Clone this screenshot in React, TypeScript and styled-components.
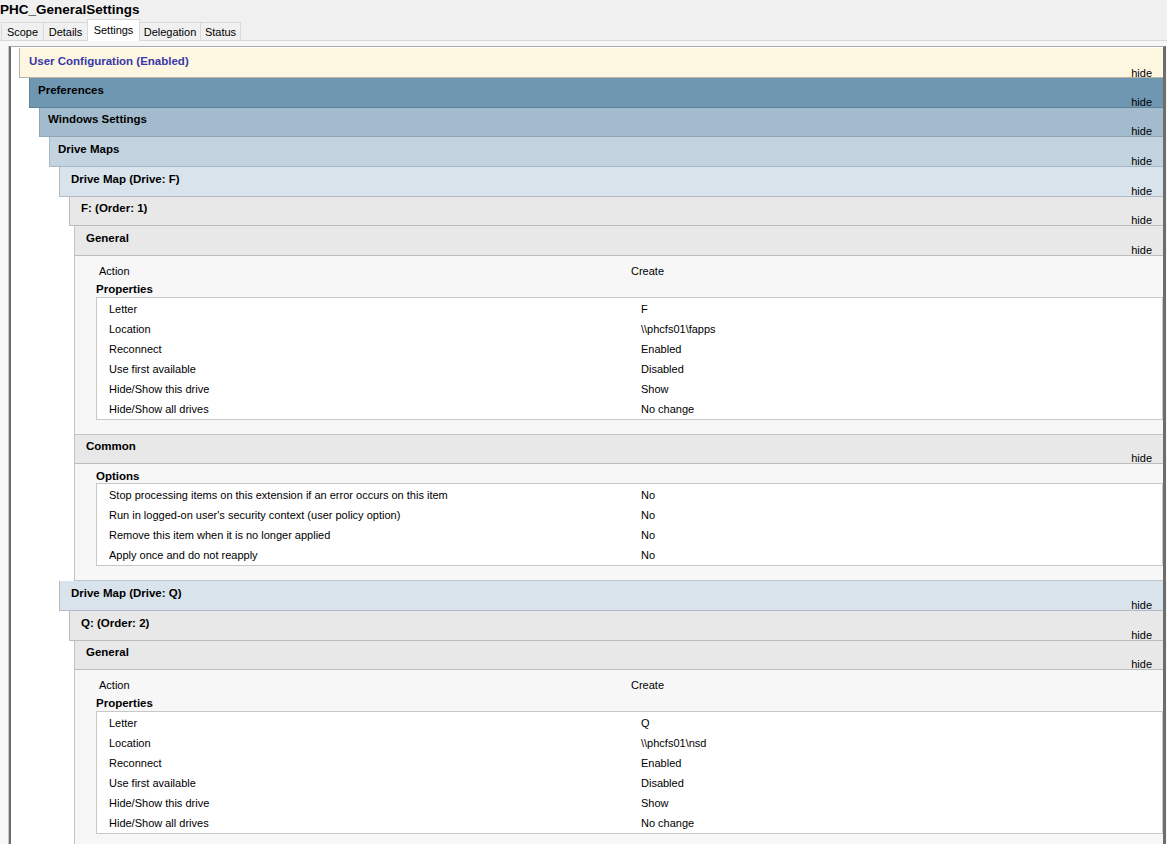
import React from 'react';
import styled, { createGlobalStyle, css } from 'styled-components';

type Tone = 'user' | 'pref' | 'win' | 'maps' | 'map' | 'item' | 'leaf';

const tones: Record<Tone, { bg: string; line: string; color: string; pad: number }> = {
  user: { bg: '#fdf6e1', line: '#b9b3a4', color: '#3838aa', pad: 9 },
  pref: { bg: '#6f97b2', line: '#5f8299', color: '#000', pad: 8 },
  win: { bg: '#a3bccd', line: '#8ea6b6', color: '#000', pad: 8 },
  maps: { bg: '#c3d4e0', line: '#a9b7c2', color: '#000', pad: 8 },
  map: { bg: '#d9e3eb', line: '#b3bcc4', color: '#000', pad: 11 },
  item: { bg: '#e8e8e8', line: '#bdbdbd', color: '#000', pad: 11 },
  leaf: { bg: '#e8e8e8', line: '#bdbdbd', color: '#000', pad: 11 },
};

const GlobalStyle = createGlobalStyle`
  html, body {
    margin: 0;
    padding: 0;
    overflow: hidden;
    background: #f0f0f0;
  }

  body {
    font-family: "Liberation Sans", Arial, sans-serif;
    font-size: 11px;
    color: #000;
  }
`;

const Page = styled.div`
  width: 1167px;
  height: 844px;
  display: flex;
  flex-direction: column;
  overflow: hidden;
`;

const PolicyName = styled.div`
  font-weight: bold;
  font-size: 13.5px;
  line-height: 19px;
`;

const TabStrip = styled.div`
  display: flex;
  align-items: flex-end;
  height: 21px;
  padding-left: 1px;
  border-bottom: 1px solid #d9d9d9;
`;

const Tab = styled.div<{ $w: number; $active?: boolean }>`
  box-sizing: border-box;
  width: ${({ $w }) => $w}px;
  height: 18px;
  line-height: 19px;
  text-align: center;
  font-size: 11px;
  background: #f0f0f0;
  border: 1px solid #d9d9d9;
  border-bottom: none;

  & + & {
    margin-left: -1px;
  }

  ${({ $active }) =>
    $active &&
    css`
      position: relative;
      height: 22px;
      line-height: 20px;
      margin-bottom: -1px;
      background: #fff;
      z-index: 1;
    `}
`;

const TabPanel = styled.div`
  flex: 1;
  background: #f7f7f7;
  padding: 5px 0 0 8px;
  display: flex;
  flex-direction: column;
`;

const Frame = styled.div`
  flex: 1;
  background: #fff;
  margin: 0 1px 0 1px;
  padding: 1px 0 0 8px;
  border-top: 1px solid #a9a9a9;
  border-left: 2px solid #6d6d6d;
  border-right: 3px solid #6d6d6d;
  box-shadow: -1px 0 0 #c6c6c6;
`;

const Header = styled.div<{ $tone: Tone }>`
  box-sizing: border-box;
  height: ${({ $tone }) => ($tone === 'user' ? '30.3px' : '29.6px')};
  display: flex;
  flex-direction: column;
  justify-content: space-between;
  padding: ${({ $tone }) => ($tone === 'user' ? '5.5px' : '4.5px')} 11px 0
    ${({ $tone }) => tones[$tone].pad}px;
  background: ${({ $tone }) => tones[$tone].bg};
  border-bottom: 1px solid ${({ $tone }) => tones[$tone].line};
  border-left: ${({ $tone }) => ($tone === 'leaf' ? 'none' : `1px solid ${tones[$tone].line}`)};
`;

const HeaderTitle = styled.span<{ $tone: Tone }>`
  font-weight: bold;
  font-size: 11.5px;
  line-height: 14px;
  color: ${({ $tone }) => tones[$tone].color};
  white-space: nowrap;
`;

const HideLink = styled.span`
  align-self: flex-end;
  font-size: 11px;
  line-height: 10px;
  color: #000;
`;

const Children = styled.div<{ $indent: number }>`
  margin-left: ${({ $indent }) => $indent}px;
`;

const Leaf = styled.section`
  background: #f7f7f7;
  border-left: 1px solid #c4c4c4;
  border-bottom: 1px solid #c4c4c4;
`;

const LeafBody = styled.div`
  padding: 3px 0 14px;
`;

const ActionRow = styled.div`
  display: grid;
  grid-template-columns: 532px 1fr;
  margin: 2px 0 0 24px;
  line-height: 20px;
`;

const GroupHeading = styled.div`
  font-weight: bold;
  font-size: 11.5px;
  line-height: 15px;
  margin-left: 21px;

  ${ActionRow} + & {
    margin-top: 1px;
  }

  &:first-child {
    margin-top: 3px;
    line-height: 13px;
  }
`;

const ValueBox = styled.div`
  margin-left: 21px;
  padding-top: 1px;
  background: #fff;
  border: 1px solid #c8c8c8;
`;

const ValueRow = styled.div`
  display: grid;
  grid-template-columns: 532px 1fr;
  padding-left: 12px;
  line-height: 20px;
  white-space: nowrap;
`;

type SectionProps = {
  title: string;
  tone: Tone;
  indent?: number;
  children?: React.ReactNode;
};

const Section = ({ title, tone, indent = 10, children }: SectionProps) => (
  <section>
    <Header $tone={tone}>
      <HeaderTitle $tone={tone}>{title}</HeaderTitle>
      <HideLink>hide</HideLink>
    </Header>
    <Children $indent={indent}>{children}</Children>
  </section>
);

const LeafSection = ({ title, children }: { title: string; children: React.ReactNode }) => (
  <Leaf>
    <Header $tone="leaf">
      <HeaderTitle $tone="leaf">{title}</HeaderTitle>
      <HideLink>hide</HideLink>
    </Header>
    <LeafBody>{children}</LeafBody>
  </Leaf>
);

const Values = ({ rows }: { rows: [string, string][] }) => (
  <ValueBox>
    {rows.map(([label, value]) => (
      <ValueRow key={label}>
        <span>{label}</span>
        <span>{value}</span>
      </ValueRow>
    ))}
  </ValueBox>
);

const driveMaps = [
  { letter: 'F', order: 1, location: '\\\\phcfs01\\fapps' },
  { letter: 'Q', order: 2, location: '\\\\phcfs01\\nsd' },
];

const commonOptions: [string, string][] = [
  ['Stop processing items on this extension if an error occurs on this item', 'No'],
  ["Run in logged-on user's security context (user policy option)", 'No'],
  ['Remove this item when it is no longer applied', 'No'],
  ['Apply once and do not reapply', 'No'],
];

const tabs = [
  { label: 'Scope', w: 43 },
  { label: 'Details', w: 45 },
  { label: 'Settings', w: 53, active: true },
  { label: 'Delegation', w: 62 },
  { label: 'Status', w: 41 },
];

export default function App() {
  return (
    <Page>
      <GlobalStyle />
      <PolicyName>PHC_GeneralSettings</PolicyName>
      <TabStrip>
        {tabs.map((t) => (
          <Tab key={t.label} $w={t.w} $active={t.active}>
            {t.label}
          </Tab>
        ))}
      </TabStrip>
      <TabPanel>
        <Frame>
          <Section title="User Configuration (Enabled)" tone="user">
            <Section title="Preferences" tone="pref">
              <Section title="Windows Settings" tone="win">
                <Section title="Drive Maps" tone="maps">
                  {driveMaps.map((d) => (
                    <Section key={d.letter} title={`Drive Map (Drive: ${d.letter})`} tone="map">
                      <Section title={`${d.letter}: (Order: ${d.order})`} tone="item" indent={5}>
                        <LeafSection title="General">
                          <ActionRow>
                            <span>Action</span>
                            <span>Create</span>
                          </ActionRow>
                          <GroupHeading>Properties</GroupHeading>
                          <Values
                            rows={[
                              ['Letter', d.letter],
                              ['Location', d.location],
                              ['Reconnect', 'Enabled'],
                              ['Use first available', 'Disabled'],
                              ['Hide/Show this drive', 'Show'],
                              ['Hide/Show all drives', 'No change'],
                            ]}
                          />
                        </LeafSection>
                        <LeafSection title="Common">
                          <GroupHeading>Options</GroupHeading>
                          <Values rows={commonOptions} />
                        </LeafSection>
                      </Section>
                    </Section>
                  ))}
                </Section>
              </Section>
            </Section>
          </Section>
        </Frame>
      </TabPanel>
    </Page>
  );
}
